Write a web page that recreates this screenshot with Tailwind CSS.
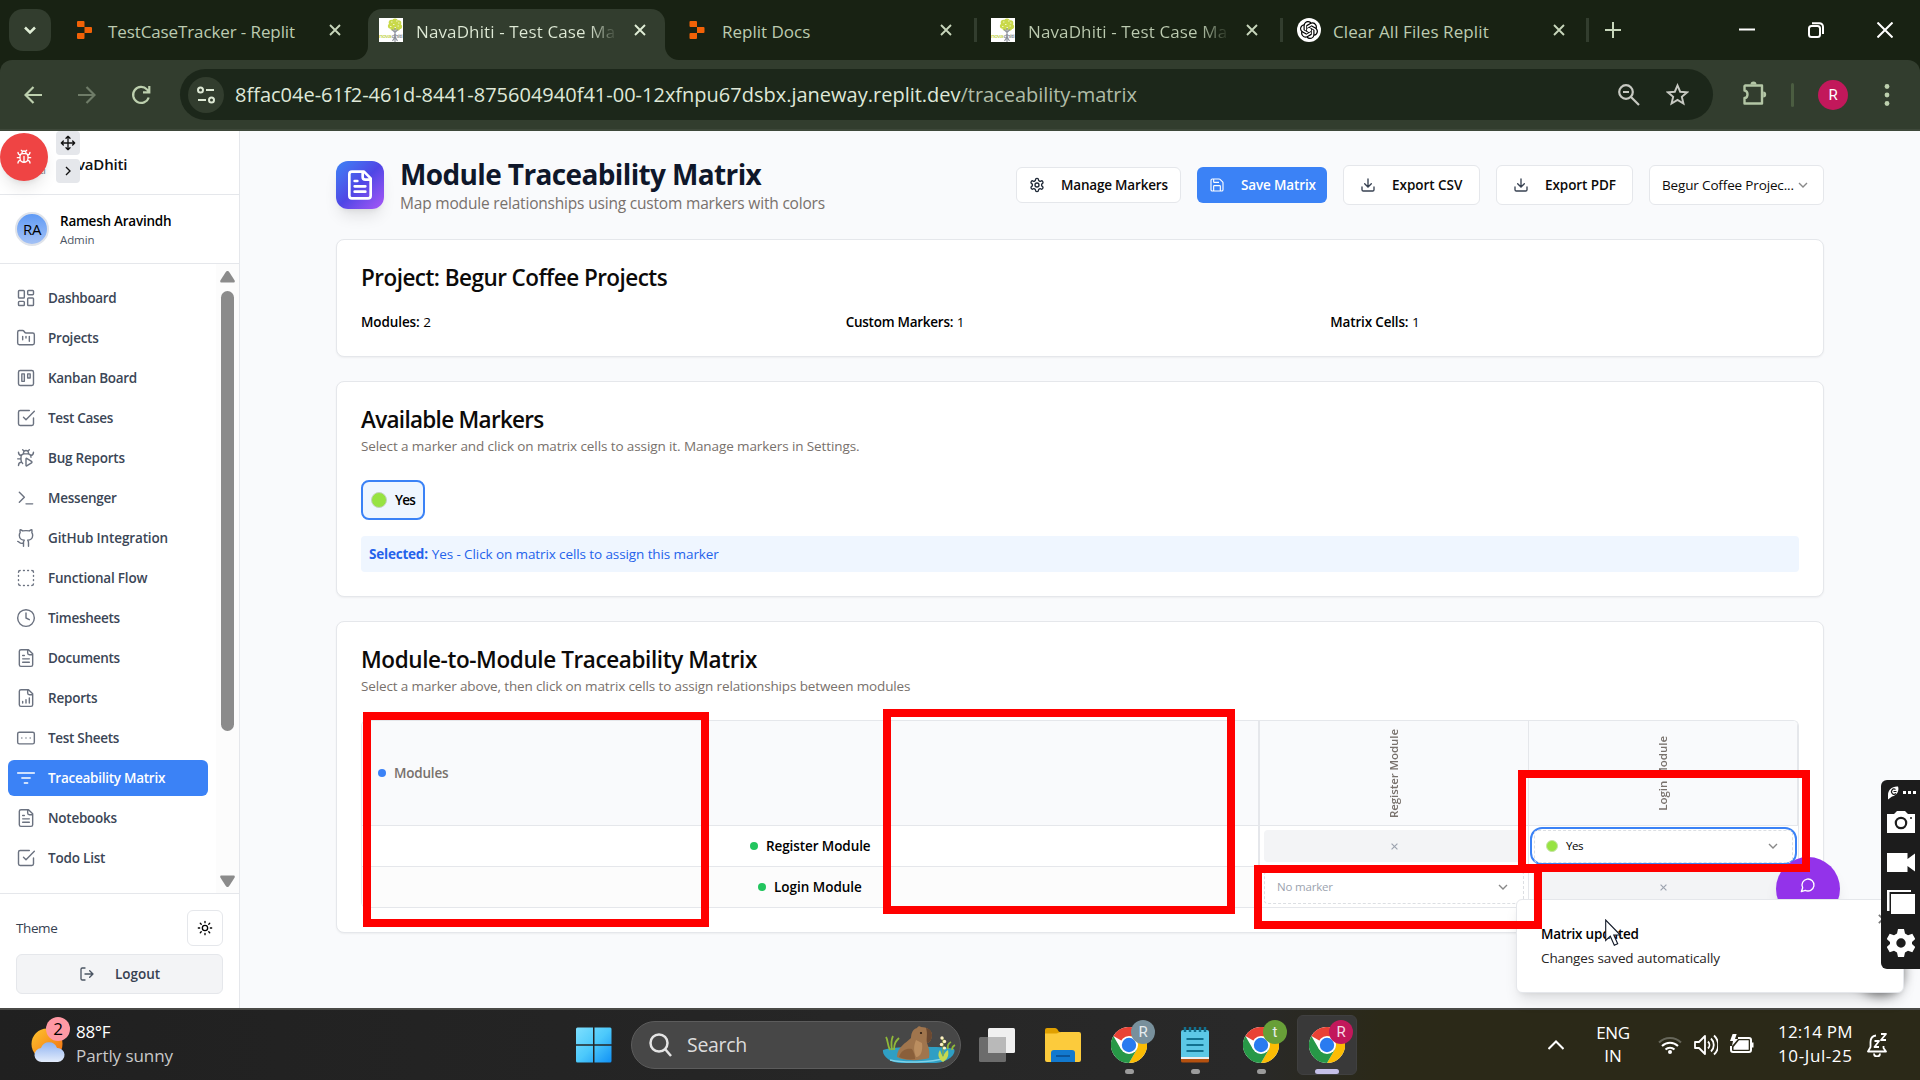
<!DOCTYPE html>
<html lang="en">
<head>
<meta charset="utf-8">
<title>NavaDhiti - Test Case Management</title>
<script src="https://cdn.jsdelivr.net/npm/@tailwindcss/browser@4"></script>
</head>
<body class="relative flex h-[1080px] w-[1920px] flex-col overflow-hidden bg-[#182213] font-['Open_Sans',sans-serif] text-[13.5px] leading-5 text-black">

<!-- Shared icon symbols -->
<svg class="hidden">
  <symbol id="dash" viewBox="0 0 24 24"><rect x="3" y="3" width="7" height="9" rx="1"/><rect x="14" y="3" width="7" height="5" rx="1"/><rect x="14" y="12" width="7" height="9" rx="1"/><rect x="3" y="16" width="7" height="5" rx="1"/></symbol>
  <symbol id="folder" viewBox="0 0 24 24"><path d="M4 20h16a2 2 0 0 0 2-2V8a2 2 0 0 0-2-2h-7.93a2 2 0 0 1-1.66-.9l-.82-1.2A2 2 0 0 0 7.93 3H4a2 2 0 0 0-2 2v13c0 1.1.9 2 2 2ZM8 10v4M12 10v2M16 10v6"/></symbol>
  <symbol id="kanban" viewBox="0 0 24 24"><rect x="3" y="3" width="18" height="18" rx="2"/><rect x="7" y="7" width="3" height="9"/><rect x="14" y="7" width="3" height="5"/></symbol>
  <symbol id="check" viewBox="0 0 24 24"><path d="m9 11 3 3L22 4M21 12v7a2 2 0 0 1-2 2H5a2 2 0 0 1-2-2V5a2 2 0 0 1 2-2h11"/></symbol>
  <symbol id="bugplay" viewBox="0 0 24 24"><path d="M12.765 21.522a.5.5 0 0 1-.765-.424v-8.196a.5.5 0 0 1 .765-.424l5.878 3.674a1 1 0 0 1 0 1.696zM14.12 3.88 16 2M18 11a4 4 0 0 0-4-4h-4a4 4 0 0 0-4 4v3a6.1 6.1 0 0 0 2 4.5M20.97 5c0 2.1-1.6 3.8-3.5 4M3 21c0-2.1 1.7-3.9 3.8-4M6 13H2M6.53 9C4.6 8.8 3 7.1 3 5M8 2l1.88 1.88M9 7.13v-1a3.003 3.003 0 1 1 6 0v1"/></symbol>
  <symbol id="terminal" viewBox="0 0 24 24"><path d="m4 17 6-6-6-6M12 19h8"/></symbol>
  <symbol id="github" viewBox="0 0 24 24"><path d="M15 22v-4a4.8 4.8 0 0 0-1-3.5c3 0 6-2 6-5.5.08-1.25-.27-2.48-1-3.5.28-1.15.28-2.35 0-3.5 0 0-1 0-3 1.5-2.64-.5-5.36-.5-8 0C6 2 5 2 5 2c-.3 1.15-.3 2.35 0 3.5A5.403 5.403 0 0 0 4 9c0 3.500 3 5.500 6 5.500-.39.490-.68 1.050-.85 1.650-.17.600-.22 1.230-.15 1.850v4M9 18c-4.510 2-5-2-7-2"/></symbol>
  <symbol id="boxsel" viewBox="0 0 24 24"><path d="M5 3a2 2 0 0 0-2 2M19 3a2 2 0 0 1 2 2M21 19a2 2 0 0 1-2 2M5 21a2 2 0 0 1-2-2M9 3h1M9 21h1M14 3h1M14 21h1M3 9v1M21 9v1M3 14v1M21 14v1"/></symbol>
  <symbol id="clock" viewBox="0 0 24 24"><circle cx="12" cy="12" r="10"/><path d="M12 6v6l4 2"/></symbol>
  <symbol id="doc" viewBox="0 0 24 24"><path d="M15 2H6a2 2 0 0 0-2 2v16a2 2 0 0 0 2 2h12a2 2 0 0 0 2-2V7ZM14 2v4a2 2 0 0 0 2 2h4M10 9H8M16 13H8M16 17H8"/></symbol>
  <symbol id="report" viewBox="0 0 24 24"><path d="M15 2H6a2 2 0 0 0-2 2v16a2 2 0 0 0 2 2h12a2 2 0 0 0 2-2V7ZM14 2v4a2 2 0 0 0 2 2h4M8 18v-2M12 18v-4M16 18v-6"/></symbol>
  <symbol id="sheet" viewBox="0 0 24 24"><rect x="2" y="5" width="20" height="14" rx="2"/><path d="M12 12h.01M17 12h.01M7 12h.01"/></symbol>
  <symbol id="filter" viewBox="0 0 24 24"><path d="M2 6h20M7 12h10M10 18h4"/></symbol>
  <symbol id="gear" viewBox="0 0 24 24"><path d="M12.220 2h-.44a2 2 0 0 0-2 2v.18a2 2 0 0 1-1 1.730l-.43.250a2 2 0 0 1-2 0l-.15-.08a2 2 0 0 0-2.730.730l-.22.380a2 2 0 0 0 .730 2.730l.150.100a2 2 0 0 1 1 1.720v.510a2 2 0 0 1-1 1.740l-.15.090a2 2 0 0 0-.73 2.730l.220.380a2 2 0 0 0 2.730.730l.150-.08a2 2 0 0 1 2 0l.430.250a2 2 0 0 1 1 1.730V20a2 2 0 0 0 2 2h.440a2 2 0 0 0 2-2v-.18a2 2 0 0 1 1-1.730l.430-.25a2 2 0 0 1 2 0l.150.080a2 2 0 0 0 2.730-.73l.220-.39a2 2 0 0 0-.73-2.730l-.15-.08a2 2 0 0 1-1-1.740v-.5a2 2 0 0 1 1-1.740l.150-.09a2 2 0 0 0 .730-2.730l-.22-.38a2 2 0 0 0-2.730-.73l-.15.080a2 2 0 0 1-2 0l-.43-.25a2 2 0 0 1-1-1.730V4a2 2 0 0 0-2-2z"/><circle cx="12" cy="12" r="3"/></symbol>
  <symbol id="save" viewBox="0 0 24 24"><path d="M15.200 3a2 2 0 0 1 1.400.600l3.800 3.800a2 2 0 0 1 .600 1.400V19a2 2 0 0 1-2 2H5a2 2 0 0 1-2-2V5a2 2 0 0 1 2-2zM17 21v-7a1 1 0 0 0-1-1H8a1 1 0 0 0-1 1v7M7 3v4a1 1 0 0 0 1 1h7"/></symbol>
  <symbol id="down" viewBox="0 0 24 24"><path d="M21 15v4a2 2 0 0 1-2 2H5a2 2 0 0 1-2-2v-4M7 10l5 5 5-5M12 15V3"/></symbol>
  <symbol id="chev" viewBox="0 0 24 24"><path d="m6 9 6 6 6-6"/></symbol>
  <symbol id="x" viewBox="0 0 12 12"><path d="m1 1 10 10M11 1 1 11"/></symbol>
  <symbol id="replit" viewBox="0 0 15 18"><path d="M0 1a1 1 0 0 1 1-1h5.500a1 1 0 0 1 1 1v5H1a1 1 0 0 1-1-1ZM7.500 6H14a1 1 0 0 1 1 1v4a1 1 0 0 1-1 1H7.500ZM0 13a1 1 0 0 1 1-1h6.500v5a1 1 0 0 1-1 1H1a1 1 0 0 1-1-1Z"/></symbol>
  <symbol id="nava" viewBox="0 0 24 24"><rect width="24" height="24" fill="#fff"/><g fill="#c9d94a"><circle cx="12.500" cy="4.500" r="2.800"/><circle cx="16" cy="3.300" r="2.800"/><circle cx="19.500" cy="5" r="2.800"/><circle cx="20.500" cy="8.500" r="2.600"/><circle cx="11.500" cy="8" r="2.600"/><circle cx="14" cy="10" r="2.600"/><circle cx="18.500" cy="10" r="2.600"/><circle cx="16" cy="7" r="3.500"/></g><path d="M12 4h1.500M17 3h1.500M14 6.500h1.500M18.500 8h1.500M11 8.500h1.500M15.500 9.500H17M19 5h1.500" stroke="#f4f7d2" stroke-width=".9"/><path d="M16 10v9M13 11.500l3 3 3-3M13.500 23l2.500-4 2.500 4M16 18v6" stroke="#9296a0" stroke-width="1.200" fill="none"/><text x="0" y="20" font-size="6" font-weight="600" fill="#c3d24a" textLength="12.500">nova</text><text x="12.500" y="20" font-size="6" font-weight="600" fill="#858a93" textLength="11.300">dhiti</text></symbol>
  <symbol id="chrome" viewBox="0 0 36 36"><circle cx="18" cy="18" r="18" fill="#fff"/><path d="M18 18 2.400 9A18 18 0 0 1 33.600 9Z" fill="#e94235"/><path d="M18 9H33.600A18 18 0 0 1 18 36L25.800 22.500Z" fill="#fbbc04"/><path d="M2.400 9A18 18 0 0 0 18 36l7.800-13.500L10.200 22.500Z" fill="#279847"/><circle cx="18" cy="18" r="9" fill="#fff"/><circle cx="18" cy="18" r="7.200" fill="#2a7bf0"/></symbol>
</svg>

<!-- Tab strip -->
<div class="flex h-[60px] shrink-0 text-[17px] text-[#bccbb0]">
  <div class="flex w-[58px] pt-[9px] pl-[9px]"><div class="flex size-[42px] items-center justify-center rounded-[14px] bg-[#323d2e]"><svg class="size-5 fill-none stroke-[#e0eed6] stroke-3"><use href="#chev"/></svg></div></div>
  <div class="relative flex w-[307px] items-center pl-[19px]"><svg class="h-[18px] w-[15px] fill-[#f26207]"><use href="#replit"/></svg><span class="ml-4 w-[209px] pt-[3px] tracking-[-0.11px] whitespace-nowrap">TestCaseTracker - Replit</span><svg class="ml-3 size-3 fill-none stroke-[#c7d6bb] stroke-[1.900]"><use href="#x"/></svg></div>
  <div class="relative flex w-[306px] items-center pl-[14px] text-[#dfead6]">
    <div class="absolute top-[9px] left-[3px] h-[51px] w-[297px] rounded-t-[14px] bg-[#323d2e]"></div>
    <svg class="absolute bottom-0 -left-[11px] size-[14px] fill-[#323d2e]" viewBox="0 0 14 14"><path d="M14 0v14H0A14 14 0 0 0 14 0"/></svg>
    <svg class="absolute right-[-8px] bottom-0 size-[14px] fill-[#323d2e]" viewBox="0 0 14 14"><path d="M0 0v14h14A14 14 0 0 1 0 0"/></svg>
    <svg class="relative size-6"><use href="#nava"/></svg><span class="relative ml-[13px] w-[202px] bg-linear-to-r from-[#dfead6] from-85% to-transparent bg-clip-text pt-[3px] tracking-[0.12px] whitespace-nowrap text-transparent">NavaDhiti - Test Case Ma</span><svg class="relative ml-4 size-3 fill-none stroke-[#e0eed6] stroke-[1.900]"><use href="#x"/></svg></div>
  <div class="relative flex w-[306px] items-center pl-[18px]"><svg class="h-[18px] w-[16px] fill-[#f26207]"><use href="#replit"/></svg><span class="ml-[17px] w-[200px] pt-[3px]">Replit Docs</span><svg class="ml-[18px] size-3 fill-none stroke-[#c7d6bb] stroke-[1.900]"><use href="#x"/></svg><i class="absolute right-0 h-6 w-[3px] bg-[#323d2e]"></i></div>
  <div class="relative flex w-[306px] items-center pl-[14px]"><svg class="size-6"><use href="#nava"/></svg><span class="ml-[13px] w-[202px] bg-linear-to-r from-[#bccbb0] from-85% to-transparent bg-clip-text pt-[3px] tracking-[0.12px] whitespace-nowrap text-transparent">NavaDhiti - Test Case Ma</span><svg class="ml-[16px] size-3 fill-none stroke-[#c7d6bb] stroke-[1.900]"><use href="#x"/></svg><i class="absolute right-0 h-6 w-[3px] bg-[#323d2e]"></i></div>
  <div class="relative flex w-[306px] items-center pl-[14px]"><div class="flex size-6 items-center justify-center rounded-full bg-white"><svg class="size-[18px] fill-black" viewBox="0 0 24 24"><path d="M22.2819 9.8211a5.9847 5.9847 0 0 0-.5157-4.9108 6.0462 6.0462 0 0 0-6.5098-2.9A6.0651 6.0651 0 0 0 4.9807 4.1818a5.9847 5.9847 0 0 0-3.9977 2.9 6.0462 6.0462 0 0 0 .7427 7.0966 5.98 5.98 0 0 0 .511 4.9107 6.051 6.051 0 0 0 6.5146 2.9001A5.9847 5.9847 0 0 0 13.2599 24a6.0557 6.0557 0 0 0 5.7718-4.2058 5.9894 5.9894 0 0 0 3.9977-2.9001 6.0557 6.0557 0 0 0-.7475-7.0729zm-9.022 12.6081a4.4755 4.4755 0 0 1-2.8764-1.0408l.1419-.0804 4.7783-2.7582a.7948.7948 0 0 0 .3927-.6813v-6.7369l2.02 1.1686a.071.071 0 0 1 .038.052v5.5826a4.504 4.504 0 0 1-4.4945 4.4944zm-9.6607-4.1254a4.4708 4.4708 0 0 1-.5346-3.0137l.142.0852 4.783 2.7582a.7712.7712 0 0 0 .7806 0l5.8428-3.3685v2.3324a.0804.0804 0 0 1-.0332.0615L9.74 19.9502a4.4992 4.4992 0 0 1-6.1408-1.6464zM2.3408 7.8956a4.485 4.485 0 0 1 2.3655-1.9728V11.6a.7664.7664 0 0 0 .3879.6765l5.8144 3.3543-2.0201 1.1685a.0757.0757 0 0 1-.071 0l-4.8303-2.7865A4.504 4.504 0 0 1 2.3408 7.872zm16.5963 3.8558L13.1038 8.364 15.1192 7.2a.0757.0757 0 0 1 .071 0l4.8303 2.7913a4.4944 4.4944 0 0 1-.6765 8.1042v-5.6772a.79.79 0 0 0-.407-.667zm2.0107-3.0231l-.142-.0852-4.7735-2.7818a.7759.7759 0 0 0-.7854 0L9.409 9.2297V6.8974a.0662.0662 0 0 1 .0284-.0615l4.8303-2.7866a4.4992 4.4992 0 0 1 6.6802 4.66zM8.3065 12.863l-2.02-1.1638a.0804.0804 0 0 1-.038-.0567V6.0742a4.4992 4.4992 0 0 1 7.3757-3.4537l-.142.0805L8.704 5.459a.7948.7948 0 0 0-.3927.6813zm1.0976-2.3654l2.602-1.4998 2.6069 1.4998v2.9994l-2.5974 1.4997-2.6067-1.4997Z"/></svg></div><span class="ml-[12px] w-[200px] pt-[3px] tracking-[0.1px]">Clear All Files Replit</span><svg class="ml-5 size-3 fill-none stroke-[#c7d6bb] stroke-[1.900]"><use href="#x"/></svg><i class="absolute right-0 h-6 w-[3px] bg-[#323d2e]"></i></div>
  <div class="flex flex-1 items-center pl-[16px] text-white">
    <svg class="size-4 fill-none stroke-[#c7d6bb] stroke-2" viewBox="0 0 16 16"><path d="M8 0v16M0 8h16"/></svg>
    <svg class="ml-[118px] size-4 fill-none stroke-white stroke-2" viewBox="0 0 16 16"><path d="M0 7.500h16"/></svg>
    <svg class="ml-[53px] size-4 fill-none stroke-white stroke-2" viewBox="0 0 16 16"><rect x="1" y="4" width="11" height="11" rx="2.500"/><path d="M4 1.200h7.500A3.500 3.500 0 0 1 15 4.700V12"/></svg>
    <svg class="ml-[53px] size-4 fill-none stroke-white stroke-2" viewBox="0 0 16 16"><path d="m.5.5 15 15M15.500.5l-15 15"/></svg>
  </div>
</div>

<!-- Toolbar -->
<div class="flex h-[71px] shrink-0 items-center rounded-t-[12px] border-b-2 border-[#3e483a] bg-[#323d2e] pl-6">
  <svg class="size-[18px] fill-none stroke-[#bdd0ae] stroke-[2.200]" viewBox="0 0 18 18"><path d="M18 9H1.500M9.500 1 1.500 9l8 8"/></svg>
  <svg class="ml-[36px] size-[18px] fill-none stroke-[#6f7c68] stroke-[2.200]" viewBox="0 0 18 18"><path d="M0 9h16.500M8.500 1l8 8-8 8"/></svg>
  <svg class="ml-[35px] size-5 fill-none stroke-[#bdd0ae] stroke-[2.200]" viewBox="0 0 20 20"><path d="M17.700 12.500A8 8 0 1 1 16 4.500l2 2M18.300 1v6.300H12"/></svg>
  <div class="ml-[29px] flex h-[51px] w-[1533px] items-center rounded-full bg-[#1c271a] pl-2">
    <div class="flex size-9 items-center justify-center rounded-full bg-[#323d2e]"><svg class="size-[18px] fill-none stroke-[#dde8d4] stroke-2" viewBox="0 0 18 18"><circle cx="3.500" cy="4" r="2.500"/><path d="M9 4h8M1 14h8"/><circle cx="14.500" cy="14" r="2.500"/></svg></div>
    <span class="ml-[11px] w-[1375px] text-[20px] whitespace-nowrap text-[#dfe8d8]">8ffac04e-61f2-461d-8441-875604940f41-00-12xfnpu67dsbx.janeway.replit.dev<span class="tracking-[-0.04px] text-[#b0bca7]">/traceability-matrix</span></span>
    <svg class="ml-2 size-[22px] fill-none stroke-[#c7c9c2] stroke-[2.200]" viewBox="0 0 22 22"><circle cx="8" cy="8" r="6.800"/><path d="M5 8h6M13 13l8 8"/></svg>
    <svg class="ml-[26px] size-[23px] fill-none stroke-[#c7c9c2] stroke-2" viewBox="0 0 24 24"><path d="m12 2.500 2.800 6.600 7.200.6-5.500 4.700 1.700 7-6.200-3.700-6.200 3.700 1.700-7L2 9.700l7.200-.6Z"/></svg>
  </div>
  <svg class="mt-[-3px] ml-[28px] size-[26px] fill-none stroke-[#b3c6a5] stroke-[2.400]" viewBox="0 0 26 26"><path d="M4 5.500h17V23.500H3.500V18c4 0 4-7.500 0-7.500V6Z" stroke-linejoin="round"/><path d="M9.500 4.500a3 3 0 0 1 6 0ZM22.200 11.500a3 3 0 0 1 0 6Z" class="fill-[#b3c6a5] stroke-none"/></svg>
  <i class="ml-[24px] h-6 w-[3px] rounded bg-[#4b5d41]"></i>
  <div class="ml-[24px] flex size-[30px] items-center justify-center rounded-full bg-[#c2185b] font-['Roboto'] text-[15px] text-white">R</div>
  <svg class="ml-[36px] h-[26px] w-[6px] fill-[#bdd0ae]" viewBox="0 0 6 26"><circle cx="3" cy="4.500" r="2.400"/><circle cx="3" cy="13" r="2.400"/><circle cx="3" cy="21.500" r="2.400"/></svg>
</div>

<!-- Application -->
<div class="relative flex h-[877px] shrink-0 bg-[#f9fafc]">
  <!-- Sidebar -->
  <aside class="flex w-60 shrink-0 flex-col border-r border-[#e5e7eb] bg-white">
    <div class="flex h-16 items-center border-b border-[#e5e7eb] pt-[2px] pl-[57px] text-[15px] font-semibold tracking-[-0.2px] text-[#111]">NavaDhiti</div>
    <div class="flex h-[69px] items-center border-b border-[#e5e7eb] pl-[15px]">
      <div class="flex size-[34px] items-center justify-center rounded-full border-2 border-[#dfe3ea] bg-linear-to-b from-[#5f9af5] to-[#a3c1f5] text-[15px] tracking-[-0.3px]">RA</div>
      <div class="ml-[11px] pt-[3px]"><div class="h-[18px] leading-[18px] font-semibold tracking-[-0.24px]">Ramesh Aravindh</div><div class="text-[11.5px] leading-[19px] tracking-[-0.1px] text-[#4b5563]">Admin</div></div>
    </div>
    <div class="flex h-[630px] border-b border-[#e5e7eb]">
      <nav class="flex w-[216px] flex-col gap-1 pt-4 pr-2 pl-2 font-semibold text-[#3b4656] *:flex *:h-9 *:w-[200px] *:items-center *:gap-3 *:rounded-md *:px-2 *:whitespace-nowrap [&_svg]:size-5 [&_svg]:fill-none [&_svg]:stroke-[#6b7280] [&_svg]:stroke-[1.700]">
        <div><svg stroke-linecap="round" stroke-linejoin="round"><use href="#dash"/></svg><span class="tracking-[-0.38px]">Dashboard</span></div>
        <div><svg stroke-linecap="round" stroke-linejoin="round"><use href="#folder"/></svg><span class="tracking-[-0.25px]">Projects</span></div>
        <div><svg stroke-linecap="round" stroke-linejoin="round"><use href="#kanban"/></svg><span class="tracking-[-0.3px]">Kanban Board</span></div>
        <div><svg stroke-linecap="round" stroke-linejoin="round"><use href="#check"/></svg><span class="tracking-[-0.32px]">Test Cases</span></div>
        <div><svg stroke-linecap="round" stroke-linejoin="round"><use href="#bugplay"/></svg><span class="tracking-[-0.22px]">Bug Reports</span></div>
        <div><svg stroke-linecap="round" stroke-linejoin="round"><use href="#terminal"/></svg><span class="tracking-[-0.24px]">Messenger</span></div>
        <div><svg stroke-linecap="round" stroke-linejoin="round"><use href="#github"/></svg><span class="tracking-[-0.13px]">GitHub Integration</span></div>
        <div><svg stroke-linecap="round" stroke-linejoin="round"><use href="#boxsel"/></svg><span class="tracking-[-0.2px]">Functional Flow</span></div>
        <div><svg stroke-linecap="round" stroke-linejoin="round"><use href="#clock"/></svg><span class="tracking-[-0.28px]">Timesheets</span></div>
        <div><svg stroke-linecap="round" stroke-linejoin="round"><use href="#doc"/></svg><span class="tracking-[-0.3px]">Documents</span></div>
        <div><svg stroke-linecap="round" stroke-linejoin="round"><use href="#report"/></svg><span class="tracking-[-0.22px]">Reports</span></div>
        <div><svg stroke-linecap="round" stroke-linejoin="round"><use href="#sheet"/></svg><span class="tracking-[-0.3px]">Test Sheets</span></div>
        <div class="bg-[#3b82f6] text-white [&_svg]:stroke-white!"><svg stroke-linecap="round"><use href="#filter"/></svg><span class="tracking-[-0.26px]">Traceability Matrix</span></div>
        <div><svg stroke-linecap="round" stroke-linejoin="round"><use href="#doc"/></svg><span class="tracking-[-0.25px]">Notebooks</span></div>
        <div><svg stroke-linecap="round" stroke-linejoin="round"><use href="#check"/></svg><span class="tracking-[-0.2px]">Todo List</span></div>
      </nav>
      <div class="flex w-[23px] flex-col items-center bg-[#fcfcfc] pt-[7px]">
        <svg class="h-[12px] w-[15px] fill-[#8b8b8b]" viewBox="0 0 15 12"><path d="M7.500 0c.8 0 1.300.5 1.700 1l5.300 8.200c.7 1.200.2 2.300-1 2.300h-12c-1.200 0-1.700-1.100-1-2.300L5.800 1c.4-.5.900-1 1.700-1"/></svg>
        <div class="mt-[8px] h-[440px] w-[13px] rounded-full bg-[#8b8b8b]"></div>
        <svg class="mt-[144px] h-[12px] w-[15px] rotate-180 fill-[#8b8b8b]" viewBox="0 0 15 12"><path d="M7.500 0c.8 0 1.300.5 1.700 1l5.300 8.200c.7 1.200.2 2.300-1 2.300h-12c-1.200 0-1.700-1.100-1-2.300L5.800 1c.4-.5.900-1 1.700-1"/></svg>
      </div>
    </div>
    <div class="flex flex-1 flex-col gap-2 px-4 pt-4">
      <div class="flex h-9 items-center justify-between text-[#374151]"><span class="tracking-[-0.4px]">Theme</span><div class="flex size-9 items-center justify-center rounded-md border border-[#e5e7eb]"><svg class="size-4 fill-none stroke-black stroke-2" viewBox="0 0 24 24" stroke-linecap="round"><circle cx="12" cy="12" r="4"/><path d="M12 2v2M12 20v2M4.930 4.930l1.410 1.410M17.660 17.660l1.410 1.410M2 12h2M20 12h2M6.340 17.660l-1.410 1.410M19.070 4.930l-1.410 1.410"/></svg></div></div>
      <div class="flex h-10 items-center rounded-md border border-[#e5e7eb] bg-[#f3f4f6] pl-[62px] font-semibold text-[#374151]"><svg class="size-4 fill-none stroke-[#4b5563] stroke-2" viewBox="0 0 24 24" stroke-linecap="round" stroke-linejoin="round"><path d="M9 21H5a2 2 0 0 1-2-2V5a2 2 0 0 1 2-2h4M16 17l5-5-5-5M21 12H9"/></svg><span class="ml-[20px]">Logout</span></div>
    </div>
  </aside>

  <!-- Page -->
  <main class="flex flex-1 flex-col gap-6 pt-7 pr-24 pl-24">
    <header class="flex h-14 items-center">
      <div class="mt-[-4px] flex size-12 items-center justify-center rounded-xl bg-linear-to-br from-[#3b82f6] via-[#4f46e5] to-[#a855f7] shadow-lg"><svg class="size-8 fill-none stroke-white stroke-2" viewBox="0 0 24 24" stroke-linecap="round" stroke-linejoin="round"><use href="#doc"/></svg></div>
      <div class="ml-4 w-[616px]"><h1 class="mt-[-2px] text-[28px] leading-[34px] font-bold tracking-[-0.63px] whitespace-nowrap text-[#0f172a]">Module Traceability Matrix</h1><p class="h-6 text-[15.500px] leading-6 tracking-[-0.19px] text-[#78716c]">Map module relationships using custom markers with colors</p></div>
      <div class="mt-[-4px] flex items-center gap-4 font-semibold text-[#0c0a09]">
        <div class="flex h-9 w-[165px] items-center rounded-md border border-[#e5e7eb] bg-white pl-[12px]"><svg class="size-4 fill-none stroke-[#1f2937] stroke-2"><use href="#gear"/></svg><span class="ml-4 tracking-[-0.19px]">Manage Markers</span></div>
        <div class="flex h-9 w-[130px] items-center rounded-md bg-[#3b82f6] pl-[12px] text-white"><svg class="size-4 fill-none stroke-white stroke-[1.700]"><use href="#save"/></svg><span class="ml-4 tracking-[-0.14px]">Save Matrix</span></div>
        <div class="flex h-10 w-[137px] items-center rounded-md border border-[#e5e7eb] bg-white pl-4"><svg class="size-4 fill-none stroke-[#374151] stroke-2" stroke-linecap="round"><use href="#down"/></svg><span class="ml-4 tracking-[-0.04px]">Export CSV</span></div>
        <div class="flex h-10 w-[137px] items-center rounded-md border border-[#e5e7eb] bg-white pl-4"><svg class="size-4 fill-none stroke-[#374151] stroke-2" stroke-linecap="round"><use href="#down"/></svg><span class="ml-4 tracking-[-0.08px]">Export PDF</span></div>
        <div class="flex h-10 w-[175px] items-center rounded-md border border-[#e5e7eb] bg-white pl-3 font-normal"><span class="w-[133px] tracking-[-0.15px] whitespace-nowrap">Begur Coffee Projec...</span><svg class="size-4 fill-none stroke-[#888] stroke-2"><use href="#chev"/></svg></div>
      </div>
    </header>

    <section class="h-[118px] shrink-0 rounded-lg border border-[#e5e7eb] bg-white px-6 pt-[22px] shadow-xs">
      <h2 class="text-[22.500px] leading-8 font-semibold tracking-[-0.54px] text-[#0c0a09]">Project: Begur Coffee Projects</h2>
      <div class="mt-[18px] grid grid-cols-3 gap-4"><div><b class="font-semibold tracking-[-0.1px]">Modules:</b> 2</div><div><b class="font-semibold tracking-[-0.26px]">Custom Markers:</b> 1</div><div><b class="font-semibold tracking-[-0.17px]">Matrix Cells:</b> 1</div></div>
    </section>

    <section class="h-[216px] shrink-0 rounded-lg border border-[#e5e7eb] bg-white px-6 pt-[22px] shadow-xs">
      <h2 class="text-[22.500px] leading-8 font-semibold tracking-[-0.71px] text-[#0c0a09]">Available Markers</h2>
      <p class="tracking-[-0.1px] text-[#78716c]">Select a marker and click on matrix cells to assign it. Manage markers in Settings.</p>
      <div class="mt-6 flex h-10 w-16 items-center rounded-lg border-2 border-[#3b82f6] bg-[#eff6ff] pl-2"><i class="size-4 rounded-full border border-[#c4d3bd] bg-[#97e342]"></i><span class="ml-2 font-semibold tracking-[-0.8px]">Yes</span></div>
      <div class="mt-4 flex h-9 items-center rounded bg-[#eff6ff] px-2 text-[#2563eb]"><b class="font-bold tracking-[-0.21px]">Selected:</b><span class="ml-1 tracking-[-0.1px]">Yes - Click on matrix cells to assign this marker</span></div>
    </section>

    <section class="h-[312px] shrink-0 rounded-lg border border-[#e5e7eb] bg-white px-6 pt-[22px] shadow-xs">
      <h2 class="text-[22.500px] leading-8 font-semibold tracking-[-0.4px] text-[#0c0a09]">Module-to-Module Traceability Matrix</h2>
      <p class="tracking-[-0.13px] text-[#78716c]">Select a marker above, then click on matrix cells to assign relationships between modules</p>
      <div class="mt-6 grid h-[188px] grid-cols-[898px_269px_1fr] grid-rows-[105px_41px_41px] overflow-hidden rounded-md border border-b-0 border-[#e5e7eb] *:border-b *:border-[#e5e7eb]">
        <div class="flex items-center border-r-2 bg-[#f9fafc] pl-4 font-semibold text-[#78716c]"><i class="size-2 rounded-full bg-[#3b82f6]"></i><span class="ml-2 tracking-[-0.2px]">Modules</span></div>
        <div class="flex items-center justify-center border-r bg-[#f9fafc]"><span class="rotate-180 text-[11.500px] font-semibold tracking-[-0.08px] text-[#78716c] [writing-mode:vertical-rl]">Register Module</span></div>
        <div class="flex items-center justify-center border-r bg-[#f9fafc]"><span class="rotate-180 text-[11.500px] font-semibold tracking-[-0.02px] text-[#78716c] [writing-mode:vertical-rl]">Login Module</span></div>

        <div class="flex items-center border-r-2 pl-[388px] font-semibold"><i class="size-2 rounded-full bg-[#22c55e]"></i><span class="ml-2 tracking-[-0.09px]">Register Module</span></div>
        <div class="flex items-center border-r px-1"><div class="flex h-8 w-full items-center justify-center rounded bg-[#f3f4f6]"><svg class="size-[7px] fill-none stroke-[#9ca3af] stroke-2"><use href="#x"/></svg></div></div>
        <div class="flex items-center p-px"><div class="flex h-full w-full items-center rounded-xl border-2 border-[#3b82f6] px-[2px]"><div class="flex h-[33px] w-full items-center rounded border border-dashed border-[#dcdfe3] px-[11px] text-[11.500px]"><i class="size-3 rounded-full border border-[#c4e3a4] bg-[#97e342]"></i><span class="ml-2 flex-1 tracking-[-0.5px]">Yes</span><svg class="size-4 fill-none stroke-[#888] stroke-2"><use href="#chev"/></svg></div></div></div>

        <div class="flex items-center border-r-2 bg-[#fcfcfc] pl-[396px] font-semibold"><i class="size-2 rounded-full bg-[#22c55e]"></i><span class="ml-2 tracking-[-0.02px]">Login Module</span></div>
        <div class="flex items-center border-r px-1"><div class="flex h-[33px] w-full items-center rounded border border-dashed border-[#dcdfe3] px-3 text-[11.500px] text-[#9ca3af]"><span class="flex-1 tracking-[-0.19px]">No marker</span><svg class="size-4 fill-none stroke-[#888] stroke-2"><use href="#chev"/></svg></div></div>
        <div class="flex items-center px-1"><div class="flex h-8 w-full items-center justify-center rounded bg-[#f3f4f6]"><svg class="size-[7px] fill-none stroke-[#9ca3af] stroke-2"><use href="#x"/></svg></div></div>
      </div>
    </section>
  </main>
</div>

<!-- Taskbar -->
<footer class="relative flex h-[72px] shrink-0 items-center border-t-2 border-[#4a4a47] bg-linear-to-r from-[#202020] via-[#292929] via-65% to-[#2b2918] to-72% text-[17px] text-white">
  <div class="relative ml-[30px] h-[50px] w-[44px]">
    <svg class="size-full" viewBox="0 0 44 50"><defs><linearGradient id="sun" x1="0" y1="0" x2="1" y2="1"><stop stop-color="#ffc52e"/><stop offset="1" stop-color="#f06a10"/></linearGradient><linearGradient id="cl" x1="0" y1="0" x2="0" y2="1"><stop stop-color="#8fb3f2"/><stop offset="1" stop-color="#e3ecfb"/></linearGradient></defs><circle cx="17" cy="24" r="15.500" fill="url(#sun)"/><path d="M12 42a7 7 0 0 1-1-14 8.500 8.500 0 0 1 16 0 7 7 0 0 1 1 14Z" fill="url(#cl)"/></svg>
    <div class="absolute -top-[3px] left-[16px] flex size-6 items-center justify-center rounded-full bg-[#ff99a4] text-black">2</div>
  </div>
  <div class="mt-[-2px] ml-[2px] w-[500px] leading-6"><div class="tracking-[-0.33px]">88°F</div><div class="tracking-[-0.07px] text-[#c9c9c9]">Partly sunny</div></div>
  <svg class="size-[36px]" viewBox="0 0 36 36"><defs><linearGradient id="win" gradientUnits="userSpaceOnUse" x1="0" y1="0" x2="36" y2="36"><stop stop-color="#7fe0ff"/><stop offset=".5" stop-color="#4cc9fb"/><stop offset="1" stop-color="#0f8ff5"/></linearGradient></defs><path fill="url(#win)" d="M0 2a1.500 1.500 0 0 1 1.500-1.500H17V17.200H0ZM18.500.5h15.700A1.500 1.500 0 0 1 35.500 2v15.200h-17ZM0 18.800h17V35.500H1.500A1.500 1.500 0 0 1 0 34ZM18.500 18.800h17V34a1.500 1.500 0 0 1-1.500 1.500H18.500Z"/></svg>
  <div class="ml-[19px] flex h-12 w-[330px] items-center rounded-full border border-[#5c5c5c] bg-[#474747] pl-[16px]">
    <svg class="size-6 fill-none stroke-[#e4e4e4] stroke-[2.500]" viewBox="0 0 24 24"><circle cx="11" cy="10" r="8.500"/><path d="m17 16 6 7"/></svg>
    <span class="ml-[15px] w-[195px] text-[19.500px] tracking-[-0.3px] text-[#dcdcdc]">Search</span>
    <svg class="h-[38px] w-[74px]" viewBox="0 0 74 38"><path d="M1 24c10-4 60-4 71-1 3 6-8 14-18 14H20C8 37 0 30 1 24" fill="#2f9fc4"/><path d="M8 34c14 3 40 3 56-2" stroke="#7ed3ea" stroke-width="1.500" fill="none"/><path d="M8 24C5 18 6 14 4 11m6 13c-1-6-1-10 1-14m1 14c0-7 2-9 5-12M66 23c-1-4 1-6 3-7m1 8c0-3 1-4 3-5" stroke="#8fb83a" stroke-width="1.800" fill="none"/><path d="M15 31c0-10 9-14 14-19 0-5 2-9 6-10 1-2 3-2 4-1 6 0 10 3 11 7 0 5-2 9-5 9 2 5 3 10 2 15-9 3-25 3-32-1Z" fill="#a0754d"/><path d="M44 2c4 1 6 4 6 7 0 4-2 8-5 8-1-5 1-9-1-15" fill="#6b4931"/><path d="M17 31c2-7 8-9 13-8 2 3 3 7 3 10-6 1-12 0-16-2" fill="#8a5f3a"/><path d="M34 14c-2 5-3 10 0 17 5 0 7-7 6-14Z" fill="#bb8e60"/><circle cx="39" cy="7" r="1.100" fill="#2a1a10"/><path d="M61 36c-6-4-5-9-3-12 1 3 2 5 3 7 1-3 2-5 5-7 1 5 0 9-5 12" fill="#c7d850"/><path d="M61 30V12" stroke="#8fa83a" stroke-width="1.200"/><g fill="#fff3c4"><circle cx="60" cy="12" r="1.700"/><circle cx="62.500" cy="15.500" r="1.700"/><circle cx="59.500" cy="18.500" r="1.700"/><circle cx="62.500" cy="22" r="1.600"/></g></svg>
  </div>
  <svg class="ml-[18px] h-[35px] w-[36px]" viewBox="0 0 36 35"><rect y="9" width="27" height="25" rx="1.500" fill="#6c6c6c"/><rect x="9" width="27" height="25" rx="1.500" fill="#f0f0f0"/><rect x="9" y="9" width="18" height="16" fill="#b9b9b9"/></svg>
  <svg class="ml-[30px] h-[34px] w-[36px]" viewBox="0 0 36 34"><path d="M0 2a2 2 0 0 1 2-2h8c3 0 3 4 5 4v6H0Z" fill="#e0a000"/><path d="M0 5.500h11c2 0 3-1.500 5-1.500h18a2 2 0 0 1 2 2v26a2 2 0 0 1-2 2H2a2 2 0 0 1-2-2Z" fill="#fccb3c"/><path d="M6 34V25a3 3 0 0 1 3-3h18a3 3 0 0 1 3 3v9Z" fill="#1279cf"/><path d="M11 28h14" stroke="#0a4a8a" stroke-width="1.500"/></svg>
  <div class="relative ml-[30px] size-9"><svg class="size-9"><use href="#chrome"/></svg><div class="absolute -top-[7px] left-[20px] flex size-6 items-center justify-center rounded-full bg-[#78909c] font-['Roboto'] text-[15px] text-[#e6ecef]">R</div><i class="absolute -bottom-[11px] left-[14px] h-[5px] w-[9px] rounded-full bg-[#9b9b9b]"></i></div>
  <div class="relative ml-[34px] h-9 w-[28px]"><svg class="size-full" viewBox="0 0 28 36"><path d="M0 5a2 2 0 0 1 2-2h24a2 2 0 0 1 2 2v25H0Z" fill="#5cc8e6"/><path d="M0 30h28v3H0Z" fill="#eee"/><path d="M0 32h28v2a1.500 1.500 0 0 1-1.500 1.500h-25A1.500 1.500 0 0 1 0 34Z" fill="#b5510f"/><path d="M5.500 12h17M5.500 18h17M5.500 24h17" stroke="#11718f" stroke-width="2"/><path d="M4 0v5M9 0v5M14 0v5M19 0v5M24 0v5" stroke="#11718f" stroke-width="2.500"/></svg><i class="absolute -bottom-[11px] left-[10px] h-[5px] w-[9px] rounded-full bg-[#9b9b9b]"></i></div>
  <div class="relative ml-[34px] size-9"><svg class="size-9"><use href="#chrome"/></svg><div class="absolute -top-[7px] left-[20px] flex size-6 items-center justify-center rounded-full bg-[#689f38] font-['Roboto'] text-[15px] text-[#e6ecef]">t</div><i class="absolute -bottom-[11px] left-[14px] h-[5px] w-[9px] rounded-full bg-[#9b9b9b]"></i></div>
  <div class="relative ml-[18px] flex h-[60px] w-[60px] items-center justify-center rounded-md border border-[#404040] bg-[#393939]"><svg class="size-9"><use href="#chrome"/></svg><div class="absolute top-[4px] left-[31px] flex size-6 items-center justify-center rounded-full bg-[#c2185b] font-['Roboto'] text-[15px] text-[#f6dce6]">R</div><i class="absolute bottom-0 left-[17px] h-[5px] w-6 rounded-full bg-[#c5c0e8]"></i></div>
  <svg class="ml-[191px] h-[10px] w-4 fill-none stroke-white stroke-2" viewBox="0 0 16 10"><path d="m.5 9 7.500-7.500L15.500 9"/></svg>
  <div class="mt-[-2px] ml-[29px] w-[40px] text-center leading-[23px]"><div class="tracking-[-0.3px]">ENG</div><div>IN</div></div>
  <svg class="ml-[25px] h-[20px] w-6 fill-none stroke-white stroke-2" viewBox="0 0 24 20"><path d="M1 7.500a15.500 15.500 0 0 1 22 0" class="stroke-[#66665a]"/><path d="M4 11a11.500 11.500 0 0 1 16 0M7.500 14.500a6.500 6.500 0 0 1 9 0"/><circle cx="12" cy="17" r="2" class="fill-white stroke-none"/></svg>
  <svg class="ml-[12px] h-[22px] w-6 fill-none stroke-white stroke-[1.800]" viewBox="0 0 24 22" stroke-linejoin="round"><path d="M1 8h4l6-6v18l-6-6H1ZM14 7.500a5 5 0 0 1 0 7M17 4.500a9 9 0 0 1 0 13M20 1.500a13 13 0 0 1 0 19"/></svg>
  <svg class="ml-[12px] h-[22px] w-6 fill-none stroke-white stroke-2" viewBox="0 0 24 22"><path d="M8 4h11a2 2 0 0 1 2 2v10a2 2 0 0 1-2 2H3a2 2 0 0 1-2-2v-4"/><path d="M9 6.200h9.700v9.500H3.500V13ZM22 8.500h1.500v5H22ZM3-1 0 7h3l-1 5 6-7H5l2-6Z" class="fill-white stroke-none"/></svg>
  <div class="mt-[-2px] ml-[24px] w-[76px] leading-6 whitespace-nowrap"><div class="tracking-[0.17px]">12:14 PM</div><div class="tracking-[0.6px]">10-Jul-25</div></div>
  <svg class="ml-[13px] h-6 w-5 fill-none stroke-white stroke-[1.800]" viewBox="0 0 20 24"><path d="M9 2.500C5 3 3.500 6 3.500 9v5L1 18.500h18L16.500 15v-2M7 20.500a3 3 0 0 0 6 0M14 1h5l-5 6h5M7.500 8h4.500l-4.500 6H12" stroke-linejoin="round"/></svg>
</footer>

<!-- Floating report widget -->
<div class="absolute top-[165px] left-[38px] text-[9px] leading-3 font-semibold tracking-tighter text-[#8b8f96]">iti</div>
<div class="absolute top-[133px] left-0 flex size-12 items-center justify-center rounded-full bg-[#ef4444] shadow-lg"><svg class="size-4 fill-none stroke-white stroke-2" viewBox="0 0 24 24" stroke-linecap="round" stroke-linejoin="round"><path d="m8 2 1.880 1.880M14.120 3.880 16 2M9 7.130v-1a3.003 3.003 0 1 1 6 0v1M12 20c-3.300 0-6-2.700-6-6v-3a4 4 0 0 1 4-4h4a4 4 0 0 1 4 4v3c0 3.300-2.700 6-6 6M12 20v-9M6.530 9C4.600 8.800 3 7.100 3 5M6 13H2M3 21c0-2.100 1.700-3.900 3.800-4M20.970 5c0 2.100-1.600 3.800-3.500 4M22 13h-4M17.200 17c2.100.1 3.800 1.900 3.800 4"/></svg></div>
<div class="absolute top-[131px] left-14 flex size-6 items-center justify-center rounded bg-[#e5e7eb]"><svg class="size-4 fill-none stroke-[#111] stroke-2" viewBox="0 0 24 24" stroke-linecap="round" stroke-linejoin="round"><path d="M5 9l-3 3 3 3M9 5l3-3 3 3M15 19l-3 3-3-3M19 9l3 3-3 3M2 12h20M12 2v20"/></svg></div>
<div class="absolute top-[159px] left-14 flex size-6 items-center justify-center rounded bg-[#e5e7eb]"><svg class="size-4 fill-none stroke-[#111] stroke-2" viewBox="0 0 24 24"><path d="m9 18 6-6-6-6"/></svg></div>

<!-- Chat button and toast -->
<div class="absolute top-[857px] left-[1776px] flex size-16 justify-center rounded-full bg-[#9333ea] pt-5 shadow-lg"><svg class="size-4 fill-none stroke-white stroke-2" viewBox="0 0 24 24" stroke-linejoin="round"><path d="M7.900 20A9 9 0 1 0 4 16.100L2 22Z"/></svg></div>
<div class="absolute top-[940px] left-[1856px] size-12 rounded-full shadow-[0_8px_12px_rgba(0,0,0,0.5)]"></div>
<div class="absolute top-[899px] left-[1516px] h-[94px] w-[388px] rounded-md border border-[#e5e7eb] bg-white pt-[24px] pl-[24px] shadow-lg"><div class="font-semibold tracking-[-0.22px]">Matrix updated</div><div class="mt-1 tracking-[-0.11px] text-[#292524]">Changes saved automatically</div><svg class="absolute top-[14px] right-[15px] size-[10px] fill-none stroke-[#777] stroke-2"><use href="#x"/></svg></div>

<!-- Annotation boxes -->
<div class="absolute top-[712px] left-[363px] h-[215px] w-[346px] border-8 border-[#f00]"></div>
<div class="absolute top-[709px] left-[883px] h-[205px] w-[352px] border-8 border-[#f00]"></div>
<div class="absolute top-[865px] left-[1254px] h-[64px] w-[288px] border-8 border-[#f00]"></div>
<div class="absolute top-[770px] left-[1518px] h-[102px] w-[292px] border-8 border-[#f00]"></div>

<!-- Capture toolbar -->
<div class="absolute top-[780px] left-[1881px] flex h-[189px] w-[39px] flex-col items-center rounded-l-md bg-[#1c1c1c]">
  <svg class="mt-[5px] h-[15px] w-[30px]" viewBox="0 0 30 15"><path d="M2 10C2 5 6 1 12 1.500c1.500 4-1 9-6 10l-4 3Z" fill="#fff"/><path d="M9.500 4.500a2.600 2.600 0 1 0 .5 4M7.500 6.500h3" stroke="#1c1c1c" stroke-width="1.200" fill="none"/><path d="M17 6h3v3h-3ZM22 6h3v3h-3ZM27 6h3v3h-3Z" fill="#fff"/></svg>
  <svg class="mt-[11px] h-[22px] w-7" viewBox="0 0 28 22"><path d="M0 3h7l3-3h8l3 3h7v19H0Z" fill="#fff"/><circle cx="14" cy="12" r="5.200" fill="none" stroke="#1c1c1c" stroke-width="2.200"/><circle cx="24" cy="7" r="1" fill="#1c1c1c"/></svg>
  <svg class="mt-[20px] h-[19px] w-7" viewBox="0 0 28 19"><path d="M0 0h20.500v6L28 .5v18L20.500 13v6H0Z" fill="#fff"/></svg>
  <svg class="mt-[18px] h-6 w-7" viewBox="0 0 28 24"><path d="M0 0h24v2H2.500v19H0Z" fill="#fff"/><path d="M4 4h24v20H4Z" fill="#fff"/></svg>
  <svg class="mt-[15px] h-7 w-7" viewBox="0 0 28 28"><path fill="#fff" fill-rule="evenodd" d="M11 0h6l1 4.500 3 1.700 4.300-1.500 3 5.200L25 13v2l3.300 3-3 5.200-4.300-1.400-3 1.700-1 4.500h-6l-1-4.500-3-1.700-4.300 1.400-3-5.200L3 15v-2L-.3 9.900l3-5.200L7 6.200l3-1.700ZM14 9.300a4.700 4.700 0 1 0 0 9.400 4.700 4.700 0 0 0 0-9.400"/></svg>
</div>

<!-- Pointer -->
<svg class="absolute top-[919px] left-[1605px] h-[28px] w-[17px]" viewBox="0 0 17 28"><path d="M.7 1v20.500l4.600-4.300 4 9 3.400-1.500-3.900-8.700h6.500Z" fill="#fff" stroke="#111827" stroke-width="1.100"/></svg>
</body>
</html>
